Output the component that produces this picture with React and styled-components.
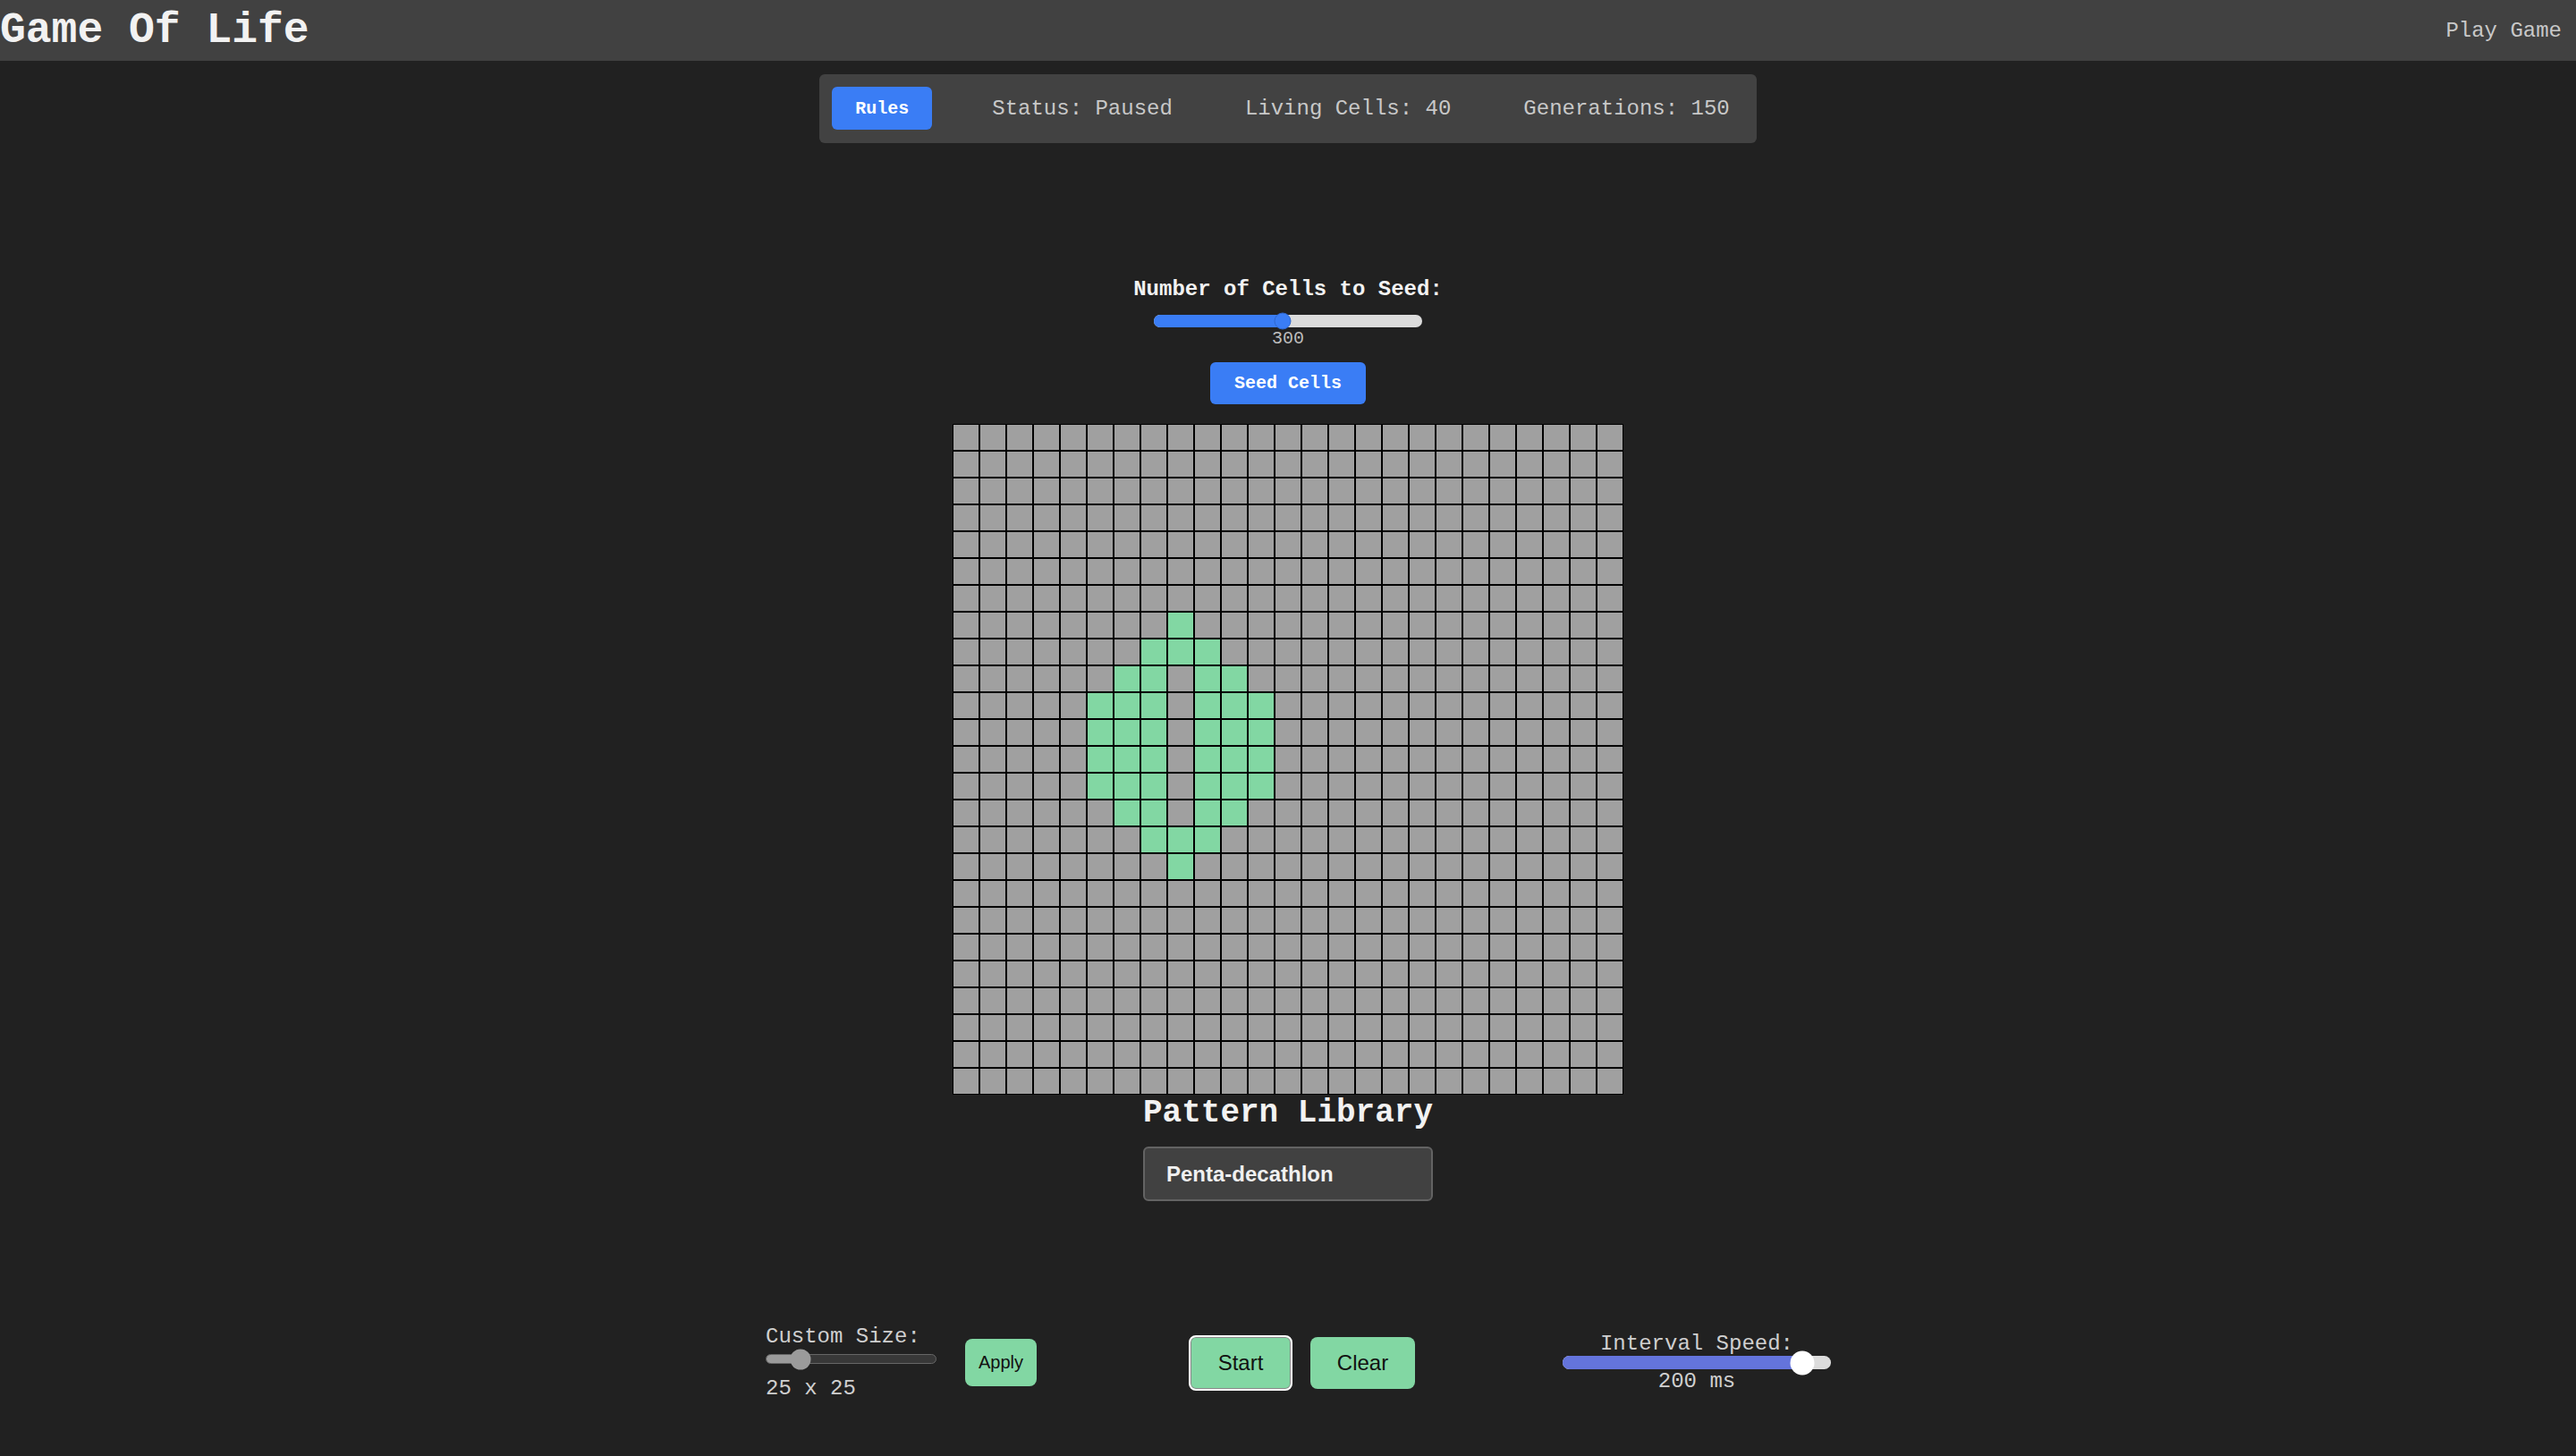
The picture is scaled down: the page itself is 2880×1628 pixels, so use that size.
import React from 'react'
import styled, { createGlobalStyle } from 'styled-components'

const GlobalStyle = createGlobalStyle`
  * {
    box-sizing: border-box;
  }
  body {
    margin: 0;
    background: #212121;
    font-family: "Liberation Mono", "Courier New", monospace;
  }
`

const Header = styled.header`
  height: 68px;
  background: #414141;
  display: flex;
  justify-content: space-between;
  align-items: center;
  padding: 0 16px 0 0;
`

const Title = styled.h1`
  margin: 0;
  font-size: 48px;
  font-weight: bold;
  color: #f2f2f2;
  line-height: normal;
`

const NavLink = styled.a`
  font-size: 24px;
  color: #c8c8c8;
  text-decoration: none;
  cursor: pointer;
`

const Main = styled.main`
  display: flex;
  flex-direction: column;
  align-items: center;
  padding-bottom: 60px;
`

const StatusBar = styled.div`
  margin-top: 15px;
  display: flex;
  align-items: center;
  padding: 14px 30px 15px 14px;
  background: #424242;
  border-radius: 6px;
`

const BlueButton = styled.button`
  width: ${p => p.$w}px;
  height: ${p => p.$h}px;
  margin-top: ${p => p.$mt || 0}px;
  background: #3a7df5;
  color: #fff;
  border: none;
  border-radius: 6px;
  font-family: "Liberation Mono", monospace;
  font-weight: bold;
  font-size: 20px;
  cursor: pointer;
`

const Stat = styled.span`
  margin-left: ${p => p.$gap}px;
  font-size: 24px;
  color: #c8c8c8;
`

const SeedLabel = styled.div`
  margin-top: 150px;
  font-size: 24px;
  font-weight: bold;
  color: #f2f2f2;
`

const Track = styled.div`
  position: relative;
  width: ${p => p.$w}px;
  height: ${p => p.$h}px;
  margin: ${p => p.$m || '0'};
  border-radius: ${p => p.$h}px;
  background: ${p => p.$bg};
  border: ${p => p.$border || 'none'};
`

const Fill = styled.div`
  position: absolute;
  left: 0;
  top: 0;
  bottom: 0;
  border-radius: inherit;
  background: ${p => p.$bg};
`

const Thumb = styled.div`
  position: absolute;
  top: 50%;
  width: ${p => p.$size}px;
  height: ${p => p.$size}px;
  border-radius: 50%;
  transform: translate(-50%, -50%);
  background: ${p => p.$bg};
  border: ${p => p.$border || 'none'};
`

const SmallValue = styled.div`
  margin-top: 1px;
  font-size: 20px;
  color: #bdbdbd;
`

const Board = styled.div`
  margin-top: 22px;
  display: grid;
  grid-template-columns: repeat(25, 30px);
`

const Cell = styled.div`
  width: 30px;
  height: 30px;
  border: 1px solid #000;
  background: ${p => (p.$alive ? '#82d7a3' : '#a0a0a0')};
`

const PatternTitle = styled.h2`
  margin: 0;
  font-size: 36px;
  font-weight: bold;
  color: #f2f2f2;
  line-height: normal;
`

const PatternSelect = styled.select`
  margin-top: 17px;
  width: 324px;
  height: 61px;
  padding: 0 0 0 24px;
  appearance: none;
  background: #414141;
  border: 2px solid #636363;
  border-radius: 6px;
  color: #f0f0f0;
  font-family: "Liberation Sans", Arial, sans-serif;
  font-weight: bold;
  font-size: 24px;
`

const Controls = styled.div`
  margin-top: 138px;
  display: flex;
  align-items: center;
  justify-content: center;
  padding-left: 23px;
`

const Group = styled.div`
  display: flex;
  align-items: center;
  margin-left: ${p => p.$ml || 0}px;
`

const Column = styled.div`
  display: flex;
  flex-direction: column;
  align-items: ${p => p.$align || 'center'};
`

const ControlText = styled.div`
  font-size: 24px;
  color: #cfcfcf;
  line-height: normal;
`

const GreenButton = styled.button`
  width: ${p => p.$w}px;
  height: ${p => p.$h}px;
  margin-left: ${p => p.$ml || 0}px;
  background: #82d7a3;
  color: #111;
  border: ${p => (p.$focused ? '2px solid #fff' : 'none')};
  box-shadow: ${p => (p.$focused ? 'inset 0 0 0 1px #8a8a8a' : 'none')};
  border-radius: 8px;
  font-family: "Liberation Sans", Arial, sans-serif;
  font-size: ${p => p.$fs}px;
  cursor: pointer;
`

const pattern = {
  7: [8],
  8: [7, 8, 9],
  9: [6, 7, 9, 10],
  10: [5, 6, 7, 9, 10, 11],
  11: [5, 6, 7, 9, 10, 11],
  12: [5, 6, 7, 9, 10, 11],
  13: [5, 6, 7, 9, 10, 11],
  14: [6, 7, 9, 10],
  15: [7, 8, 9],
  16: [8],
}

function Slider({ width, height, frac, trackBg, fillBg, thumbBg, thumbSize, thumbBorder, border, margin }) {
  return (
    <Track $w={width} $h={height} $bg={trackBg} $border={border} $m={margin}>
      <Fill $bg={fillBg} style={{ width: frac * width }} />
      <Thumb $size={thumbSize} $bg={thumbBg} $border={thumbBorder} style={{ left: frac * width }} />
    </Track>
  )
}

export default function App() {
  const cells = []
  for (let r = 0; r < 25; r++) {
    for (let c = 0; c < 25; c++) {
      const alive = (pattern[r] || []).includes(c)
      cells.push(<Cell key={r + '-' + c} $alive={alive} />)
    }
  }
  const living = cells.filter(c => c.props.$alive).length

  return (
    <>
      <GlobalStyle />
      <Header>
        <Title>Game Of Life</Title>
        <NavLink>Play Game</NavLink>
      </Header>

      <Main>
        <StatusBar>
          <BlueButton $w={112} $h={48}>Rules</BlueButton>
          <Stat $gap={67}>Status: Paused</Stat>
          <Stat $gap={81}>Living Cells: {living}</Stat>
          <Stat $gap={81}>Generations: 150</Stat>
        </StatusBar>

        <SeedLabel>Number of Cells to Seed:</SeedLabel>
        <Slider
          width={300}
          height={14}
          frac={300 / 625}
          trackBg="#dcdcdc"
          fillBg="#3a7df5"
          thumbBg="#3a7df5"
          thumbSize={19}
          thumbBorder="1px solid #2f68cf"
          margin="15px 0 0"
        />
        <SmallValue>300</SmallValue>
        <BlueButton $w={174} $h={47} $mt={15}>Seed Cells</BlueButton>

        <Board>{cells}</Board>

        <PatternTitle>Pattern Library</PatternTitle>
        <PatternSelect defaultValue="penta">
          <option value="penta">Penta-decathlon</option>
          <option value="glider">Glider</option>
          <option value="pulsar">Pulsar</option>
        </PatternSelect>

        <Controls>
          <Group>
            <Column $align="flex-start">
              <ControlText>Custom Size:</ControlText>
              <Slider
                width={191}
                height={11}
                frac={(25 - 10) / 75}
                trackBg="#383838"
                border="1px solid #666"
                fillBg="#9b9b9b"
                thumbBg="#9b9b9b"
                thumbSize={23}
                margin="6px 0 14px"
              />
              <ControlText>25 x 25</ControlText>
            </Column>
            <GreenButton $w={80} $h={53} $fs={20} $ml={32}>Apply</GreenButton>
          </Group>

          <Group $ml={170}>
            <GreenButton $w={116} $h={62} $fs={24} $focused>Start</GreenButton>
            <GreenButton $w={117} $h={58} $fs={24} $ml={20}>Clear</GreenButton>
          </Group>

          <Group $ml={165}>
            <Column>
              <ControlText>Interval Speed:</ControlText>
              <Slider
                width={300}
                height={15}
                frac={(1450 - 200) / 1400}
                trackBg="#dcdcdc"
                fillBg="#6474dc"
                thumbBg="#ffffff"
                thumbSize={27}
              />
              <ControlText>200 ms</ControlText>
            </Column>
          </Group>
        </Controls>
      </Main>
    </>
  )
}
